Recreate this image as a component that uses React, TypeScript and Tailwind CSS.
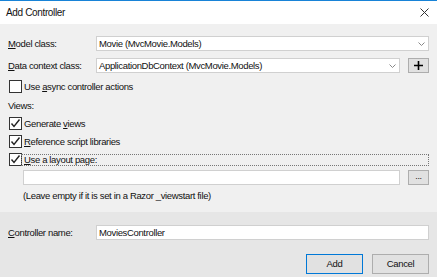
import { ReactNode } from 'react';

function Check({ checked }: { checked?: boolean }) {
  return (
    <div className="flex size-[13px] shrink-0 items-center justify-center border border-[#333] bg-white">
      {checked && (
        <svg width="11" height="11" viewBox="0 0 11 11">
          <path d="M1.5 5.5 L4 8.5 L9.5 1.5" fill="none" stroke="#222" strokeWidth="1.4" />
        </svg>
      )}
    </div>
  );
}

function Chevron() {
  return (
    <svg width="7" height="4" viewBox="0 0 7 4" className="mr-[3px]">
      <path d="M0.5 0.5 L3.5 3.5 L6.5 0.5" fill="none" stroke="#888" strokeWidth="1" />
    </svg>
  );
}

function Combo({ value }: { value: string }) {
  return (
    <div className="flex h-[15px] flex-1 items-center justify-between border border-[#d0d0d0] bg-white pl-[2px]">
      <span className="leading-none">{value}</span>
      <Chevron />
    </div>
  );
}

function SideButton({ children }: { children: ReactNode }) {
  return (
    <div className="ml-[8px] flex h-[15px] w-[21px] shrink-0 items-center justify-center border border-[#adadad] bg-[#e1e1e1]">
      {children}
    </div>
  );
}

function Label({ children }: { children: ReactNode }) {
  return <div className="w-[88px] shrink-0 whitespace-nowrap leading-none">{children}</div>;
}

export default function App() {
  return (
    <div
      className="flex h-[277px] w-[437px] flex-col overflow-hidden whitespace-nowrap bg-[#f0f0f0] text-[9.5px] tracking-[-0.35px] text-[#111]"
      style={{ fontFamily: '"Liberation Sans", Arial, sans-serif' }}
    >
      {/* title bar */}
      <div className="flex h-[24px] shrink-0 items-center justify-between border-t border-[#1883d7] bg-white pl-[6px] pr-[8px]">
        <span className="text-[10px] leading-none">Add Controller</span>
        <svg width="9" height="9" viewBox="0 0 9 9">
          <path d="M0.5 0.5 L8.5 8.5 M8.5 0.5 L0.5 8.5" stroke="#333" strokeWidth="1" />
        </svg>
      </div>

      {/* body */}
      <div className="flex h-[188px] shrink-0 flex-col px-[8px]">
        <div className="mt-[12px] flex h-[15px] items-center">
          <Label>
            <u>M</u>odel class:
          </Label>
          <Combo value="Movie (MvcMovie.Models)" />
        </div>

        <div className="mt-[7px] flex h-[15px] items-center">
          <Label>
            <u>D</u>ata context class:
          </Label>
          <Combo value="ApplicationDbContext (MvcMovie.Models)" />
          <SideButton>
            <svg width="9" height="9" viewBox="0 0 9 9">
              <path d="M4.5 0 V9 M0 4.5 H9" stroke="#000" strokeWidth="1.6" />
            </svg>
          </SideButton>
        </div>

        <div className="mt-[7px] flex h-[13px] items-center gap-[2px] pl-[1px]">
          <Check />
          <span className="leading-none">
            Use <u>a</u>sync controller actions
          </span>
        </div>

        <div className="mt-[5px] flex h-[15px] items-center leading-none">Views:</div>

        <div className="mt-[4px] flex h-[13px] items-center gap-[2px] pl-[1px]">
          <Check checked />
          <span className="leading-none">
            Generate <u>v</u>iews
          </span>
        </div>

        <div className="mt-[5px] flex h-[13px] items-center gap-[2px] pl-[1px]">
          <Check checked />
          <span className="leading-none">
            <u>R</u>eference script libraries
          </span>
        </div>

        <div className="mt-[5px] flex h-[13px] items-center pl-[1px]">
          <Check checked />
          <div className="-ml-px flex h-[12px] flex-1 items-center border border-dotted border-[#777] pl-[2px]">
            <span className="leading-none">
              <u>U</u>se a layout page:
            </span>
          </div>
        </div>

        <div className="mt-[3px] flex h-[16px] items-center pl-[15px]">
          <div className="h-[15px] flex-1 border border-[#d0d0d0] bg-white" />
          <SideButton>
            <span className="pb-[2px] text-[9px] leading-none">...</span>
          </SideButton>
        </div>

        <div className="mt-[6px] pl-[15px] leading-none">(Leave empty if it is set in a Razor _viewstart file)</div>
      </div>

      {/* footer */}
      <div className="flex flex-1 flex-col bg-[#e6e6e6] px-[8px]">
        <div className="mt-[13px] flex h-[15px] items-center">
          <Label>
            <u>C</u>ontroller name:
          </Label>
          <div className="flex h-[15px] flex-1 items-center border border-[#d0d0d0] bg-white pl-[2px]">
            <span className="leading-none">MoviesController</span>
          </div>
        </div>

        <div className="mt-[14px] flex justify-end gap-[9px]">
          <div className="flex h-[20px] w-[57px] items-center justify-center border border-[#0078d7] bg-[#e1e1e1] leading-none">
            Add
          </div>
          <div className="flex h-[20px] w-[57px] items-center justify-center border border-[#adadad] bg-[#e1e1e1] leading-none">
            Cancel
          </div>
        </div>
      </div>
    </div>
  );
}
